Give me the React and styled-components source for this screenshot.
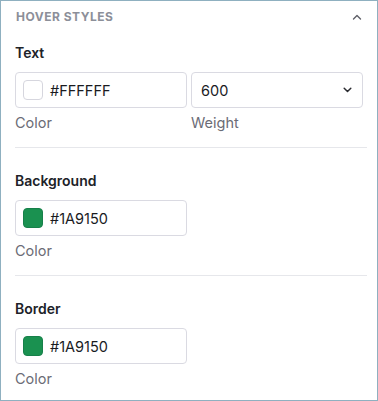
import React from "react";
import styled, { createGlobalStyle } from "styled-components";

const GlobalStyle = createGlobalStyle`
    html, body {
        margin: 0;
        padding: 0;
        background: #ffffff;
    }
    * {
        box-sizing: border-box;
    }
`;

const Panel = styled.div`
    width: 378px;
    height: 401px;
    border: 1px solid #8fb0c0;
    background: #ffffff;
    font-family: Inter, "Noto Sans", sans-serif;
    color: #1f2126;
    padding: 0 10px 0 14px;
    overflow: hidden;
`;

const Header = styled.div`
    display: flex;
    align-items: center;
    justify-content: space-between;
    height: 31px;
    padding: 0 5px 0 1px;
`;

const HeaderTitle = styled.span`
    font-size: 12px;
    font-weight: 700;
    letter-spacing: 0.5px;
    text-transform: uppercase;
    color: #8c8f99;
`;

const Section = styled.section`
    padding: ${(p) => (p.first ? "11px" : "23px")} 0 14px;
    border-bottom: ${(p) => (p.last ? "none" : "1px solid #e6e7eb")};
`;

const Label = styled.div`
    font-size: 14px;
    font-weight: 600;
    line-height: 20px;
    margin-bottom: 9px;
    color: #202228;
`;

const FieldRow = styled.div`
    display: grid;
    grid-template-columns: 172px 172px;
    gap: 4px;
`;

const Field = styled.div`
    display: flex;
    flex-direction: column;
`;

const InputBox = styled.div`
    display: flex;
    align-items: center;
    height: 36px;
    border: 1px solid #dadae2;
    border-radius: 4px;
    padding: 0 9px 0 7px;
    font-size: 14.5px;
    color: #1a1b1f;
    gap: 7px;
`;

const SelectBox = styled(InputBox)`
    justify-content: space-between;
    padding: 0 10px 0 9px;
`;

const Swatch = styled.span`
    width: 20px;
    height: 20px;
    border-radius: 4px;
    background: ${(p) => p.color};
    border: 1px solid ${(p) => (p.color === "#FFFFFF" ? "#d6d6de" : "#17804a")};
    flex-shrink: 0;
`;

const Helper = styled.div`
    font-size: 14.5px;
    line-height: 20px;
    color: #6b6c76;
    margin-top: 5px;
`;

const ChevronUp = () => (
    <svg width="10" height="6" viewBox="0 0 10 6" fill="none">
        <path d="M1.5 5L5 1.5L8.5 5" stroke="#5f6068" strokeWidth="1.4" strokeLinecap="round" strokeLinejoin="round" />
    </svg>
);

const ChevronDown = () => (
    <svg width="9" height="6" viewBox="0 0 9 6" fill="none">
        <path d="M1.2 1.3L4.5 4.5L7.8 1.3" stroke="#2a2b30" strokeWidth="1.5" strokeLinecap="round" strokeLinejoin="round" />
    </svg>
);

function ColorInput({ value }) {
    return (
        <Field>
            <InputBox>
                <Swatch color={value} />
                {value}
            </InputBox>
            <Helper>Color</Helper>
        </Field>
    );
}

export default function App() {
    return (
        <>
            <GlobalStyle />
            <Panel>
                <Header>
                    <HeaderTitle>Hover Styles</HeaderTitle>
                    <ChevronUp />
                </Header>
                <Section first>
                    <Label>Text</Label>
                    <FieldRow>
                        <ColorInput value="#FFFFFF" />
                        <Field>
                            <SelectBox>
                                600
                                <ChevronDown />
                            </SelectBox>
                            <Helper>Weight</Helper>
                        </Field>
                    </FieldRow>
                </Section>
                <Section>
                    <Label>Background</Label>
                    <FieldRow>
                        <ColorInput value="#1A9150" />
                    </FieldRow>
                </Section>
                <Section last>
                    <Label>Border</Label>
                    <FieldRow>
                        <ColorInput value="#1A9150" />
                    </FieldRow>
                </Section>
            </Panel>
        </>
    );
}
